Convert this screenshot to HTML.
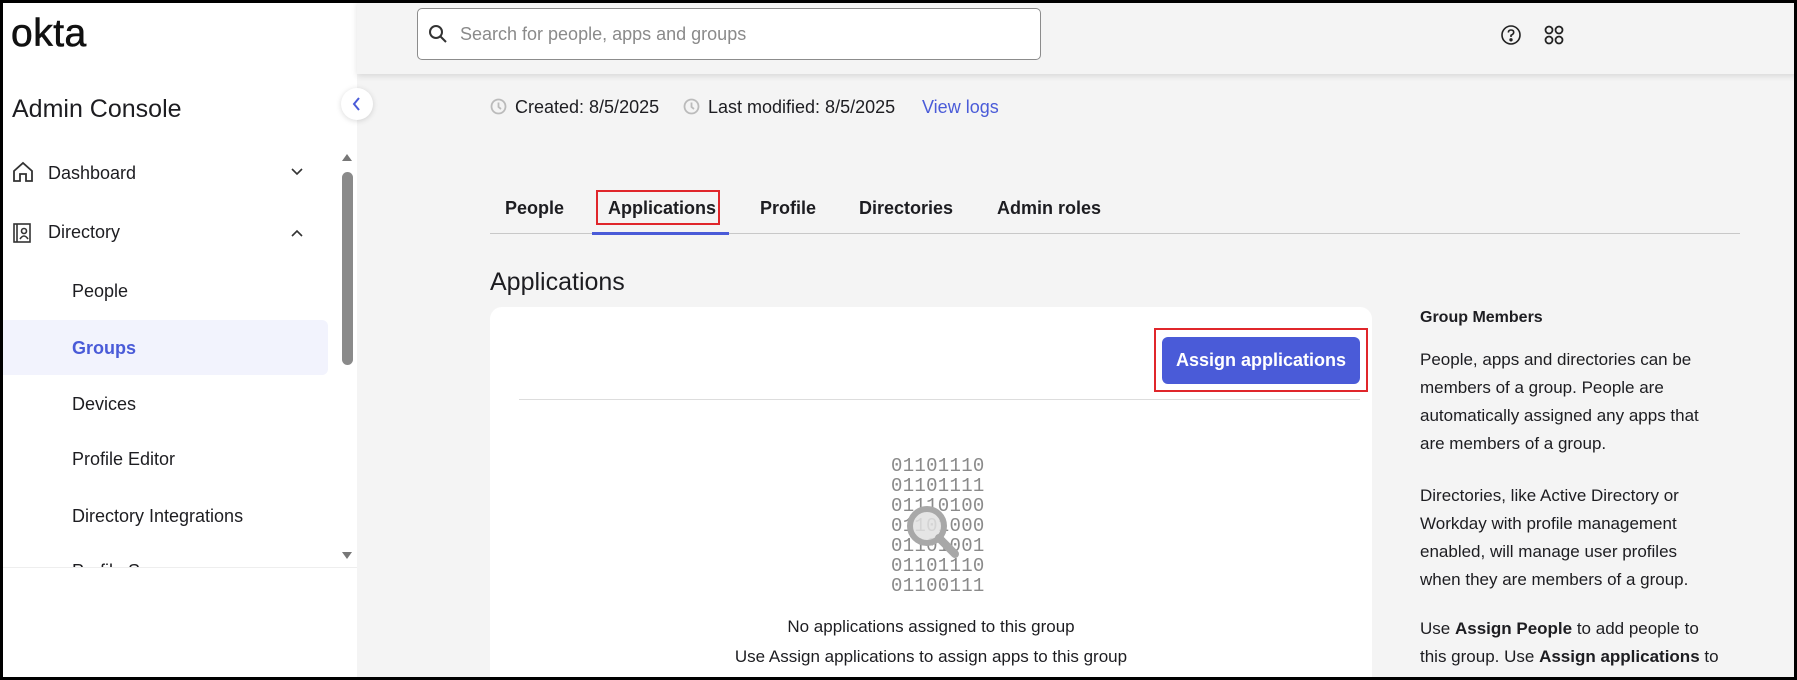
<!DOCTYPE html>
<html><head><meta charset="utf-8"><style>
*{margin:0;padding:0;box-sizing:border-box}
html,body{width:1797px;height:680px;overflow:hidden}
body{background:#f4f4f4;font-family:"Liberation Sans",sans-serif;color:#1d1d21}
#wrap{position:relative;width:1797px;height:680px;overflow:hidden}
.a{position:absolute;white-space:nowrap}
#frame{position:absolute;left:0;top:0;width:1797px;height:680px;border:3px solid #000;z-index:50;pointer-events:none}
#side{position:absolute;left:0;top:0;width:357px;height:680px;background:#fff}
.nav{position:absolute;font-size:18px;color:#1d1d21}
.hdr{position:absolute;left:357px;top:0;width:1440px;height:74px;background:#f4f4f4;box-shadow:0 2px 6px rgba(0,0,0,.12)}
.tab{position:absolute;top:198px;font-size:18px;font-weight:bold;color:#1d1d21}
.rp{position:absolute;left:1420px;font-size:17px;line-height:28px;color:#1d1d21}
.bin{position:absolute;left:891px;top:456px;font-family:"Liberation Mono",monospace;font-size:19px;line-height:20px;color:#8a8a8a;letter-spacing:0.3px}
</style></head><body><div id="wrap">
<div id="side">
  <div class="a" style="left:11px;top:15px;font-size:39px;line-height:38px;letter-spacing:0.5px;color:#111;-webkit-text-stroke:0.6px #111">okta</div>
  <div class="a" style="left:12px;top:95px;font-size:25px;color:#1d1d21">Admin Console</div>
  <svg class="a" style="left:12px;top:161px" width="22" height="22" viewBox="0 0 22 22" fill="none" stroke="#333" stroke-width="1.8"><path d="M2 10 L11 2 L20 10 V20 H14 V13 H8 V20 H2 Z"/></svg>
  <div class="nav" style="left:48px;top:163px">Dashboard</div>
  <svg class="a" style="left:290px;top:167px" width="14" height="10"><path d="M2 2 L7 7 L12 2" fill="none" stroke="#333" stroke-width="1.6"/></svg>
  <svg class="a" style="left:12px;top:222px" width="20" height="22" viewBox="0 0 20 22" fill="none" stroke="#333" stroke-width="1.6"><rect x="2" y="2" width="16" height="18"/><line x1="5" y1="2" x2="5" y2="20"/><circle cx="12" cy="9" r="2.5"/><path d="M8 17 Q12 11 16 17"/></svg>
  <div class="nav" style="left:48px;top:222px">Directory</div>
  <svg class="a" style="left:290px;top:228px" width="14" height="10"><path d="M2 8 L7 3 L12 8" fill="none" stroke="#333" stroke-width="1.6"/></svg>
  <div class="nav" style="left:72px;top:281px">People</div>
  <div class="a" style="left:0;top:320px;width:328px;height:55px;background:#f2f3fd;border-radius:0 6px 6px 0"></div>
  <div class="nav" style="left:72px;top:338px;color:#4a5bd8;font-weight:bold">Groups</div>
  <div class="nav" style="left:72px;top:394px">Devices</div>
  <div class="nav" style="left:72px;top:449px">Profile Editor</div>
  <div class="nav" style="left:72px;top:506px">Directory Integrations</div>
  <div style="position:absolute;left:0;top:561px;width:340px;height:7px;overflow:hidden"><div class="nav" style="left:72px;top:0">Profile Sources</div></div>
  <div class="a" style="left:0;top:567px;width:357px;height:113px;background:#fff;border-top:1px solid #eee"></div>
  <svg class="a" style="left:340px;top:152px" width="14" height="10"><path d="M2 9 L7 2 L12 9Z" fill="#777"/></svg>
  <div class="a" style="left:342px;top:172px;width:11px;height:193px;background:#8a8a8a;border-radius:6px"></div>
  <svg class="a" style="left:340px;top:551px" width="14" height="10"><path d="M2 1 L7 8 L12 1Z" fill="#777"/></svg>
</div>
<div class="hdr"></div>
<div class="a" style="left:417px;top:8px;width:624px;height:52px;border:1px solid #8c8c8c;border-radius:5px;background:#fff"></div>
<svg class="a" style="left:428px;top:24px" width="20" height="20" fill="none" stroke="#333" stroke-width="2"><circle cx="8" cy="8" r="6"/><line x1="12.5" y1="12.5" x2="18" y2="18"/></svg>
<div class="a" style="left:460px;top:24px;font-size:18px;color:#8a8a8a">Search for people, apps and groups</div>
<svg class="a" style="left:1500px;top:24px" width="22" height="22" fill="none" stroke="#222" stroke-width="1.6"><circle cx="11" cy="11" r="9"/><path d="M8.3 8.5 Q8.5 6 11 6 Q13.7 6 13.7 8.4 Q13.7 10 11 11.3 V13"/><circle cx="11" cy="15.8" r="0.9" fill="#222"/></svg>
<svg class="a" style="left:1543px;top:24px" width="22" height="22" fill="none" stroke="#222" stroke-width="1.8"><circle cx="6" cy="6" r="3.5"/><circle cx="16" cy="6" r="3.5"/><circle cx="6" cy="16" r="3.5"/><circle cx="16" cy="16" r="3.5"/></svg>
<div class="a" style="left:341px;top:88px;width:32px;height:32px;border-radius:50%;background:#fff;box-shadow:0 1px 6px rgba(0,0,0,.15)"></div>
<svg class="a" style="left:351px;top:96px" width="12" height="16"><path d="M8 2 L3 8 L8 14" fill="none" stroke="#4a5bd8" stroke-width="2"/></svg>

<svg class="a" style="left:490px;top:98px" width="17" height="17" fill="none" stroke="#bbb" stroke-width="1.8"><circle cx="8.5" cy="8.5" r="7"/><path d="M8.5 4.5 V9 L11 11"/></svg>
<div class="a" style="left:515px;top:97px;font-size:18px">Created: 8/5/2025</div>
<svg class="a" style="left:683px;top:98px" width="17" height="17" fill="none" stroke="#bbb" stroke-width="1.8"><circle cx="8.5" cy="8.5" r="7"/><path d="M8.5 4.5 V9 L11 11"/></svg>
<div class="a" style="left:708px;top:97px;font-size:18px">Last modified: 8/5/2025</div>
<div class="a" style="left:922px;top:97px;font-size:18px;color:#4a5bd8">View logs</div>

<div class="tab" style="left:505px">People</div>
<div class="tab" style="left:608px">Applications</div>
<div class="tab" style="left:760px">Profile</div>
<div class="tab" style="left:859px">Directories</div>
<div class="tab" style="left:997px">Admin roles</div>
<div class="a" style="left:596px;top:190px;width:124px;height:35px;border:2px solid #e0262b"></div>
<div class="a" style="left:490px;top:233px;width:1250px;height:1px;background:#c8c8c8"></div>
<div class="a" style="left:592px;top:232px;width:137px;height:3px;background:#4a5bd8"></div>

<div class="a" style="left:490px;top:268px;font-size:25px">Applications</div>
<div class="a" style="left:490px;top:307px;width:882px;height:373px;background:#fff;border-radius:12px 12px 0 0"></div>
<div class="a" style="left:1162px;top:337px;width:198px;height:47px;background:#4a5bd8;border-radius:6px;color:#fff;font-weight:bold;font-size:18px;line-height:47px;text-align:center">Assign applications</div>
<div class="a" style="left:1154px;top:328px;width:214px;height:64px;border:2px solid #e0262b"></div>
<div class="a" style="left:519px;top:399px;width:841px;height:1px;background:#ddd"></div>

<div class="bin">01101110<br>01101111<br>01110100<br>01101000<br>01101001<br>01101110<br>01100111</div>
<svg class="a" style="left:905px;top:504px" width="60" height="60"><circle cx="22" cy="22" r="17" fill="rgba(225,225,225,.85)" stroke="#a8a8a8" stroke-width="6"/><line x1="34" y1="34" x2="50" y2="50" stroke="#a8a8a8" stroke-width="8" stroke-linecap="round"/></svg>
<div class="a" style="left:490px;width:882px;top:617px;text-align:center;font-size:17px">No applications assigned to this group</div>
<div class="a" style="left:490px;width:882px;top:647px;text-align:center;font-size:17px">Use Assign applications to assign apps to this group</div>

<div class="rp" style="top:304px;font-weight:bold;font-size:16px">Group Members</div>
<div class="rp" style="top:346px">People, apps and directories can be<br>members of a group. People are<br>automatically assigned any apps that<br>are members of a group.</div>
<div class="rp" style="top:482px">Directories, like Active Directory or<br>Workday with profile management<br>enabled, will manage user profiles<br>when they are members of a group.</div>
<div class="rp" style="top:615px">Use <b>Assign People</b> to add people to<br>this group. Use <b>Assign applications</b> to</div>
<div id="frame"></div>
</div></body></html>
